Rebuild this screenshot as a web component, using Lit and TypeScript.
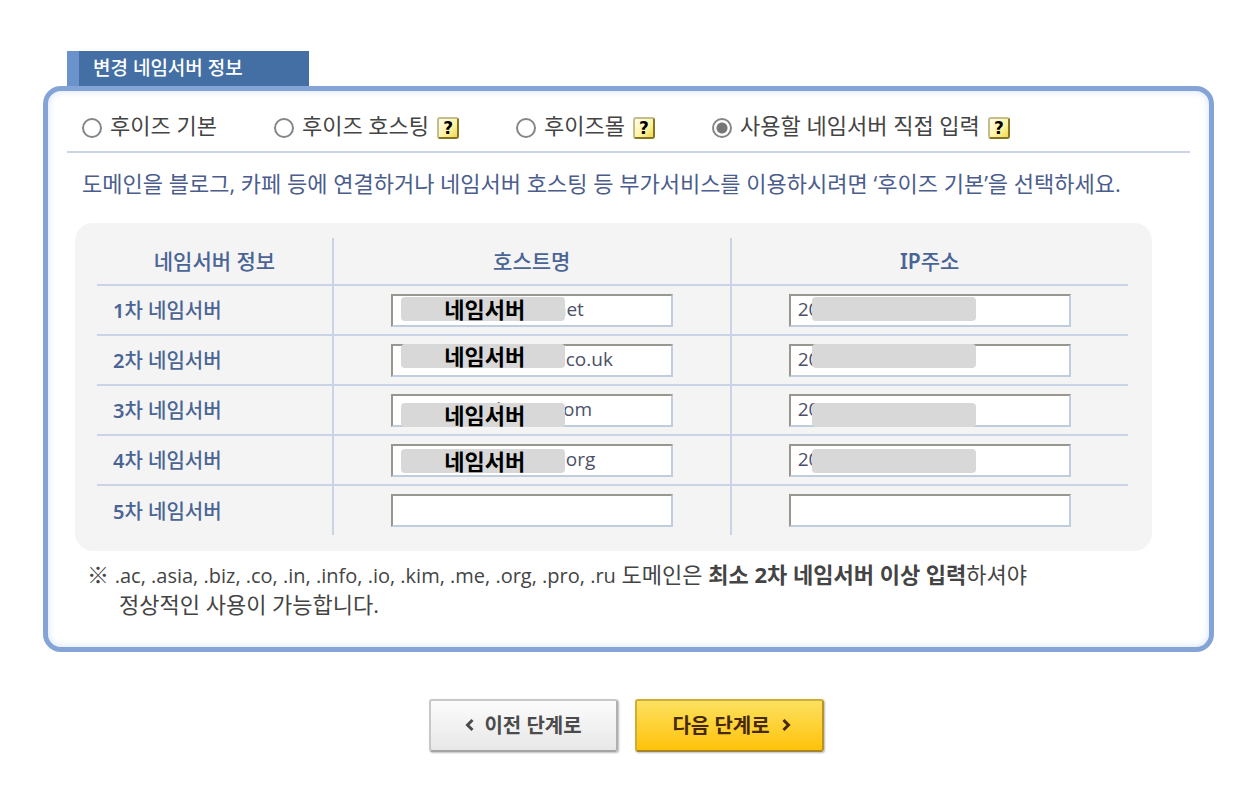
import { LitElement, html, css, nothing } from "lit";
import { customElement, state } from "lit/decorators.js";

interface Choice {
  id: string;
  label: string;
  help: boolean;
}

interface ServerRow {
  label: string;
  host: string;
  hostIndent: number;
  ip: string;
  maskTop: number | null;
}

const CHOICES: Choice[] = [
  { id: "basic", label: "후이즈 기본", help: false },
  { id: "hosting", label: "후이즈 호스팅", help: true },
  { id: "mall", label: "후이즈몰", help: true },
  { id: "custom", label: "사용할 네임서버 직접 입력", help: true },
];

const ROWS: ServerRow[] = [
  { label: "1차 네임서버", host: ".net", hostIndent: 157, ip: "20", maskTop: 3 },
  { label: "2차 네임서버", host: ".co.uk", hostIndent: 168, ip: "20", maskTop: 0 },
  { label: "3차 네임서버", host: "ns143.anchor17.com", hostIndent: 14, ip: "202.251.183.113", maskTop: 9 },
  { label: "4차 네임서버", host: ".org", hostIndent: 168, ip: "20", maskTop: 5 },
  { label: "5차 네임서버", host: "", hostIndent: 7, ip: "", maskTop: null },
];

@customElement("app-root")
export class AppRoot extends LitElement {
  @state() private selected = "custom";

  static styles = css`
    :host {
      display: block;
      box-sizing: border-box;
      padding: 51px 34px 48px 43px;
      background: #fff;
      color: #444;
      font-family: "Open Sans", "Noto Sans CJK KR", sans-serif;
      font-size: 22px;
      line-height: 30px;
    }
    * {
      box-sizing: border-box;
    }
    .tab {
      width: 242px;
      height: 35px;
      margin: 0 0 0 24px;
      padding-left: 14px;
      border-left: 12px solid #6a93cc;
      background: #436fa4;
      color: #fff;
      font-size: 19px;
      font-weight: 500;
      line-height: 35px;
    }
    .card {
      padding: 20px 19px 28px;
      border: 5px solid #84a3d6;
      border-radius: 18px;
      box-shadow: inset 0 0 7px 1px #dce8fb;
    }
    .choices {
      display: flex;
      gap: 57px;
      margin: 0;
      padding: 0 0 6px 15px;
      border: 0;
      border-bottom: 2px solid #c9d4e6;
    }
    .choice {
      display: flex;
      align-items: center;
      gap: 8px;
      height: 34px;
      white-space: nowrap;
    }
    .choice label {
      padding-bottom: 6px;
    }
    .radio {
      appearance: none;
      width: 20px;
      height: 20px;
      margin: 0;
      border: 2px solid #868686;
      border-radius: 50%;
      background: #fff;
    }
    .radio:checked {
      background: radial-gradient(circle, #767676 5px, #fff 6px);
    }
    .help {
      width: 22px;
      height: 22px;
      padding: 0;
      border: 2px solid;
      border-color: #c5bd8c #857523 #857523 #c5bd8c;
      border-radius: 3px;
      background: linear-gradient(135deg, #fffef0, #fdf3a0 60%, #f0d850);
      color: #000;
      font: bold 17px/18px "DejaVu Sans", sans-serif;
    }
    .lead {
      margin: 15px 0 25px 15px;
      color: #4b5d8c;
    }
    .panel {
      margin: 0 38px 0 8px;
      padding: 15px 24px 16px 22px;
      border-radius: 18px;
      background: #f4f4f4;
    }
    .servers {
      width: 100%;
      border-collapse: collapse;
      table-layout: fixed;
      color: #4a6594;
    }
    .servers th,
    .servers td {
      height: 50px;
      padding: 0;
      border: 0 solid #cbd3e7;
      font-family: "Noto Sans", "Noto Sans CJK KR", sans-serif;
      font-weight: 500;
    }
    .servers thead th {
      height: 47px;
      font-size: 21px;
    }
    .servers tr:not(:last-child) td,
    .servers tr:not(:last-child) th,
    .servers thead tr th {
      border-bottom-width: 2px;
    }
    .servers .divided {
      border-left-width: 2px;
    }
    .servers .latin {
      font-weight: 600;
    }
    .name-col {
      width: 236px;
    }
    .servers .row-label {
      padding: 2px 0 0 16px;
      font-size: 20px;
      text-align: left;
    }
    .field {
      position: relative;
      width: 282px;
      height: 33px;
      margin: 0 auto;
    }
    .box {
      display: block;
      width: 100%;
      height: 100%;
      padding: 0 0 2px;
      border: 2px solid;
      border-color: #97978f #c0cddf #c0cddf #97978f;
      border-radius: 0;
      background: #fff;
      color: #4d5068;
      font-family: "Open Sans", "Noto Sans CJK KR", sans-serif;
      font-size: 19px;
      outline: none;
    }
    .mask {
      position: absolute;
      left: 10px;
      width: 164px;
      height: 24px;
      border-radius: 4px;
      background: #d8d8d8;
      color: #000;
      font-weight: 700;
      line-height: 24px;
      text-align: center;
      padding-left: 4px;
    }
    .mask.ip {
      left: 23px;
    }
    .note {
      margin: 8px 0 0 20px;
      padding-left: 32px;
      text-indent: -32px;
    }
    .domains {
      font-size: 20px;
      line-height: 20px;
    }
    .actions {
      display: flex;
      justify-content: center;
      gap: 17px;
      margin-top: 47px;
      padding-right: 4px;
    }
    .step {
      display: flex;
      align-items: center;
      justify-content: center;
      gap: 10px;
      width: 189px;
      height: 53px;
      padding: 0 0 2px;
      border: 2px solid;
      border-radius: 3px;
      box-shadow: 1px 1px 2px #bbb;
      font-family: inherit;
      font-size: 20px;
      font-weight: 700;
    }
    .prev {
      border-color: #c8c8c8 #b0b0b0 #a4a4a4 #c8c8c8;
      background: linear-gradient(#fcfcfc, #e7e7e7);
      color: #4b4b4b;
    }
    .next {
      padding-left: 4px;
      border-color: #cfae35 #b99324 #a88428 #cfae35;
      background: linear-gradient(#fce160, #ffc20a);
      color: #46280a;
      gap: 12px;
    }
    .arrow {
      width: 9px;
      height: 14px;
      fill: none;
      stroke: currentColor;
      stroke-width: 3;
    }
  `;

  private renderChoice(c: Choice) {
    return html`<div class="choice">
      <input
        class="radio"
        type="radio"
        name="mode"
        id=${c.id}
        .checked=${this.selected === c.id}
        @change=${() => (this.selected = c.id)}
      />
      <label for=${c.id}>${c.label}</label>
      ${c.help ? html`<button class="help" type="button" aria-label="${c.label} ?">?</button>` : nothing}
    </div>`;
  }

  private renderRow(r: ServerRow) {
    const top = `top:${r.maskTop}px`;
    return html`<tr>
      <th class="row-label" scope="row"><span class="latin">${r.label[0]}</span>${r.label.slice(1)}</th>
      <td class="divided">
        <div class="field">
          <input class="box" type="text" aria-label="${r.label} 호스트명" style="padding-left:${r.hostIndent}px" .value=${r.host} />
          ${r.maskTop === null ? nothing : html`<span class="mask" style=${top}>네임서버</span>`}
        </div>
      </td>
      <td class="divided">
        <div class="field">
          <input class="box" type="text" aria-label="${r.label} IP주소" style="padding-left:7px" .value=${r.ip} />
          ${r.maskTop === null ? nothing : html`<span class="mask ip" style=${top}></span>`}
        </div>
      </td>
    </tr>`;
  }

  render() {
    return html`
      <h2 class="tab">변경 네임서버 정보</h2>
      <section class="card">
        <fieldset class="choices">${CHOICES.map((c) => this.renderChoice(c))}</fieldset>
        <p class="lead">도메인을 블로그, 카페 등에 연결하거나 네임서버 호스팅 등 부가서비스를 이용하시려면 ‘후이즈 기본’을 선택하세요.</p>
        <div class="panel">
          <table class="servers">
            <thead>
              <tr>
                <th class="name-col" scope="col">네임서버 정보</th>
                <th class="divided" scope="col">호스트명</th>
                <th class="divided" scope="col"><span class="latin">IP</span>주소</th>
              </tr>
            </thead>
            <tbody>${ROWS.map((r) => this.renderRow(r))}</tbody>
          </table>
        </div>
        <p class="note">
          ※ <span class="domains">.ac, .asia, .biz, .co, .in, .info, .io, .kim, .me, .org, .pro, .ru</span> 도메인은
          <b>최소 2차 네임서버 이상 입력</b>하셔야<br /><span>정상적인 사용이 가능합니다.</span>
        </p>
      </section>
      <div class="actions">
        <button class="step prev" type="button">
          <svg class="arrow" viewBox="0 0 9 14" aria-hidden="true"><path d="M7.5 2 2.5 7l5 5" /></svg>이전 단계로
        </button>
        <button class="step next" type="button">
          다음 단계로<svg class="arrow" viewBox="0 0 9 14" aria-hidden="true"><path d="M1.5 2l5 5-5 5" /></svg>
        </button>
      </div>
    `;
  }
}
